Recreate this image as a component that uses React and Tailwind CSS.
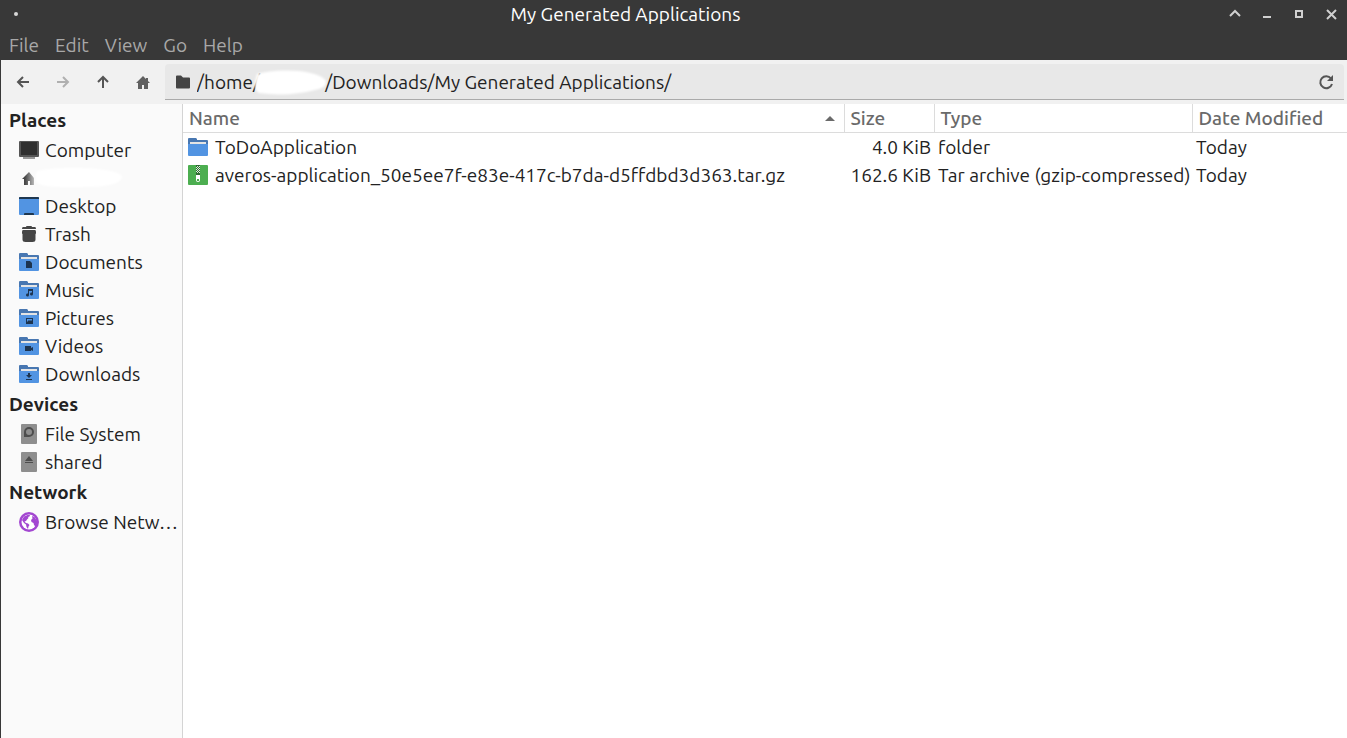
import React from "react";

const menus = ["File", "Edit", "View", "Go", "Help"];

function ComputerIcon() {
  return (
    <svg viewBox="0 0 20 20" className="size-5" aria-hidden="true">
      <path fill="#999" d="M4 17h12v2H4z" />
      <rect y="1" width="20" height="16" rx="1" fill="#555" />
      <rect x="2" y="2" width="16" height="13" fill="#303030" />
    </svg>
  );
}

function UserHomeIcon() {
  return (
    <svg viewBox="0 0 20 20" className="size-5" aria-hidden="true">
      <defs>
        <linearGradient id="fade">
          <stop offset="0.25" stopColor="#454545" />
          <stop offset="1" stopColor="#b8b8b8" />
        </linearGradient>
      </defs>
      <path fill="url(#fade)" d="M10 4 3 11h2v6h4v-4h2v4h4v-7z" />
    </svg>
  );
}

function DesktopIcon() {
  return (
    <svg viewBox="0 0 20 20" className="size-5" aria-hidden="true">
      <rect y="1" width="20" height="18" rx="1" fill="#5294e2" />
      <path fill="#1e3750" d="M0 3V2a1 1 0 0 1 1-1h18a1 1 0 0 1 1 1v1zM5 19v-1a1 1 0 0 1 1-1h8a1 1 0 0 1 1 1v1z" />
    </svg>
  );
}

function TrashIcon() {
  return (
    <svg viewBox="0 0 20 20" className="size-5" aria-hidden="true">
      <path
        fill="#454545"
        d="M8 2h4q1 0 1 1h3q1 0 1 2H3q0-2 1-2h3q0-1 1-1zM4 6h12q1 0 1 2v1q0 1-.5 1v5.500q0 2.500-3 2.500h-7q-3 0-3-2.500V10Q3 10 3 9V8q0-2 1-2z"
      />
    </svg>
  );
}

function FolderIcon({ children }) {
  return (
    <svg viewBox="0 0 20 20" className="size-5" aria-hidden="true">
      <path fill="#4877b1" d="M0 11V2a1 1 0 0 1 1-1h7l1 1v1h10a1 1 0 0 1 1 1v7z" />
      <path fill="#e4e4e4" d="M2 5h16v5H2z" />
      <path fill="#5294e2" d="M0 7h20v11a1 1 0 0 1-1 1H1a1 1 0 0 1-1-1z" />
      <g fill="#1d344f">{children}</g>
    </svg>
  );
}

function FileSystemIcon() {
  return (
    <svg viewBox="0 0 20 20" className="size-5" aria-hidden="true">
      <rect x="2" width="16" height="20" rx="1" fill="#8e8e8e" />
      <path fill="#4d4d4d" fillRule="evenodd" d="M10 3a5 5 0 1 1 0 10H5V8a5 5 0 0 1 5-5zm0 2a3 3 0 1 0 0 6 3 3 0 0 0 0-6z" />
    </svg>
  );
}

function RemovableIcon() {
  return (
    <svg viewBox="0 0 20 20" className="size-5" aria-hidden="true">
      <rect x="2" width="16" height="20" rx="1" fill="#8e8e8e" />
      <path fill="#4d4d4d" d="m10 4 4 5H6zM6 10h8v1H6z" />
    </svg>
  );
}

function NetworkIcon() {
  return (
    <svg viewBox="0 0 20 20" className="size-5" aria-hidden="true">
      <circle cx="10" cy="10" r="10" fill="#a347d1" />
      <circle cx="10" cy="10" r="7.500" fill="#fff" />
      <path
        fill="#a347d1"
        d="M5 4.500 8.500 3H11l-.5 1.500L9 5l.5 1L8 7.500 7 9l-1.500.5L7 11l2 .5 1.500 1.500-1 1.500-.5 2.500-1.500-2-.5-2.500L5 11 3 8zM13 4l2.500 1L18 9v4l-1.500 1.500L15 13l-.5-2-2-1-.5-2 1.500-1.500z"
      />
    </svg>
  );
}

function ArchiveIcon() {
  return (
    <svg viewBox="0 0 20 20" className="size-5" aria-hidden="true">
      <rect width="20" height="20" rx="1" fill="#4cae50" />
      <path fill="#2f6b32" d="M8 0h4v10H8z" />
      <path
        fill="#dfeede"
        d="M9 1h1v1H9zM11 1h1v1h-1zM8 2h1v1H8zM10 2h1v1h-1zM9 3h1v1H9zM11 3h1v1h-1zM8 4h1v1H8zM10 4h1v1h-1zM9 5h1v1H9zM11 5h1v1h-1zM8 6h1v1H8zM10 6h1v1h-1zM9 7h1v1H9zM11 7h1v1h-1z"
      />
      <path fill="#fff" fillRule="evenodd" d="M8 10h4v5a2 2 0 0 1-4 0zm1 4v2h2v-2z" />
    </svg>
  );
}

const sections = [
  {
    title: "Places",
    items: [
      { name: "Computer", icon: <ComputerIcon /> },
      { name: "", icon: <UserHomeIcon /> },
      { name: "Desktop", icon: <DesktopIcon /> },
      { name: "Trash", icon: <TrashIcon /> },
      { name: "Documents", icon: <FolderIcon><path d="M7 9h4l2 2v5H7z" /></FolderIcon> },
      {
        name: "Music",
        icon: (
          <FolderIcon>
            <path d="M9 9h5v5a1.500 1.500 0 1 1-1-1.400V11h-3v4a1.500 1.500 0 1 1-1-1.400z" />
          </FolderIcon>
        ),
      },
      {
        name: "Pictures",
        icon: (
          <FolderIcon>
            <path fillRule="evenodd" d="M7 10h7v6H7zm1 1v3l2-2 1 1 1-1 1 1v-2z" />
          </FolderIcon>
        ),
      },
      { name: "Videos", icon: <FolderIcon><path d="M6 10h6v2l2-1v4l-2-1v1H6z" /></FolderIcon> },
      {
        name: "Downloads",
        icon: (
          <FolderIcon>
            <path d="M9 9h2v2h2l-3 3-3-3h2zM7 15h6v1H7z" />
          </FolderIcon>
        ),
      },
    ],
  },
  {
    title: "Devices",
    items: [
      { name: "File System", icon: <FileSystemIcon /> },
      { name: "shared", icon: <RemovableIcon /> },
    ],
  },
  { title: "Network", items: [{ name: "Browse Netw…", icon: <NetworkIcon /> }] },
];

const files = [
  { name: "ToDoApplication", size: "4.0 KiB", type: "folder", date: "Today", icon: <FolderIcon /> },
  {
    name: "averos-application_50e5ee7f-e83e-417c-b7da-d5ffdbd3d363.tar.gz",
    size: "162.6 KiB",
    type: "Tar archive (gzip-compressed)",
    date: "Today",
    icon: <ArchiveIcon />,
  },
];

const windowButtons = [
  { label: "Roll up", drawing: <path d="m3 10 5-5 5 5" fill="none" stroke="currentColor" strokeWidth="2" /> },
  { label: "Minimize", drawing: <path d="M4 10h8v2H4z" fill="currentColor" /> },
  { label: "Maximize", drawing: <path d="M5 5h6v6H5z" fill="none" stroke="currentColor" strokeWidth="2" /> },
  { label: "Close", drawing: <path d="m4 4 9 9M13 4l-9 9" fill="none" stroke="currentColor" strokeWidth="2" /> },
];

function ToolButton({ label, disabled, children }) {
  return (
    <button
      type="button"
      aria-label={label}
      disabled={disabled}
      className="flex h-9 w-10 items-center justify-center text-[#555] disabled:text-[#b0b0b0]"
    >
      <svg viewBox="0 0 16 16" className="size-4" fill="none" stroke="currentColor" strokeWidth="2" aria-hidden="true">
        {children}
      </svg>
    </button>
  );
}

export default function App() {
  return (
    <div className="flex min-h-screen flex-col bg-white font-['Ubuntu','Noto_Sans',sans-serif] text-[19px] leading-7 text-[#222]">
      <header className="bg-[#383838]">
        <div className="flex h-7 items-center">
          <div className="flex w-8 justify-center">
            <span className="size-1 rounded-full bg-[#d8d8d8]" />
          </div>
          <h1 className="flex-1 text-center text-white">My Generated Applications</h1>
          <div className="flex text-[#d0d0d0]">
            {windowButtons.map((b) => (
              <button key={b.label} type="button" aria-label={b.label} className="flex h-7 w-8 items-center justify-center">
                <svg viewBox="0 0 16 16" className="size-4" aria-hidden="true">
                  {b.drawing}
                </svg>
              </button>
            ))}
          </div>
        </div>
        <nav className="flex h-8 items-center px-px pt-[2px] text-[#a8a8a8]">
          {menus.map((m) => (
            <button key={m} type="button" className="px-2">
              {m}
            </button>
          ))}
        </nav>
      </header>

      <div className="flex flex-1 flex-col border-l border-[#383838]">
        <div className="flex h-11 items-center bg-[#f1f1f1] pr-[3px] pl-[2px]">
          <ToolButton label="Back">
            <path d="M14 8H3M8 3 3 8l5 5" />
          </ToolButton>
          <ToolButton label="Forward" disabled>
            <path d="M2 8h11M8 3l5 5-5 5" />
          </ToolButton>
          <ToolButton label="Up">
            <path d="M8 14V3M3 8l5-5 5 5" />
          </ToolButton>
          <ToolButton label="Home">
            <path fill="#606060" stroke="none" d="M8 2 1 9h2v6h4v-4h2v4h4V9h2l-2-2V4h-2v1z" />
          </ToolButton>
          <div className="relative ml-[2px] flex h-9 flex-1 items-center rounded-t border-b border-[#aaa] bg-[#e8e8e8] pl-[11px]">
            <svg viewBox="0 0 14 14" className="size-[14px]" aria-hidden="true">
              <path fill="#444" d="M0 1.500A1 1 0 0 1 1 .5h4l2 2h6a1 1 0 0 1 1 1v9a1 1 0 0 1-1 1H1a1 1 0 0 1-1-1z" />
            </svg>
            <input
              aria-label="Location"
              defaultValue={"/home/" + "\u00a0".repeat(15) + "/Downloads/My Generated Applications/"}
              className="ml-[7px] h-7 min-w-0 flex-1 bg-transparent outline-none"
            />
            <svg viewBox="0 0 84 28" className="absolute top-[5px] left-[85px] h-7 w-[84px]" aria-hidden="true">
              <path fill="#fff" className="blur-[1px]" d="M7 5Q24 0 49 2Q72 5 76 12Q77 19 65 21Q38 28 9 24Q2 21 7 5z" />
            </svg>
            <button type="button" aria-label="Reload" className="flex w-9 justify-center text-[#555]">
              <svg viewBox="0 0 16 16" className="size-4" aria-hidden="true">
                <path d="M13 4.500A6 6 0 1 0 14 10" fill="none" stroke="currentColor" strokeWidth="2" />
                <path d="M15 1v6H9z" fill="currentColor" />
              </svg>
            </button>
          </div>
        </div>

        <div className="flex flex-1">
          <aside className="w-[182px] shrink-0 border-r border-[#d4d4d4] bg-[#fafafa]">
            {sections.map((s) => (
              <section key={s.title}>
                <h2 className="flex h-8 items-center pl-2 font-bold">{s.title}</h2>
                <ul>
                  {s.items.map((item) => (
                    <li key={item.name}>
                      <a
                        href="#"
                        aria-label={item.name || "Home folder"}
                        className="relative flex h-7 items-center gap-[6px] pl-[18px] whitespace-nowrap"
                      >
                        <span className="shrink-0">{item.icon}</span>
                        {item.name ? (
                          <span>{item.name}</span>
                        ) : (
                          <svg viewBox="0 0 90 24" className="absolute top-[2px] left-8 h-6 w-[90px]" aria-hidden="true">
                            <path fill="#fff" className="blur-[1px]" d="M4 5Q24 1 50 2Q88 4 89 11Q88 21 50 21Q16 22 6 18Q0 15 4 5z" />
                          </svg>
                        )}
                      </a>
                    </li>
                  ))}
                </ul>
              </section>
            ))}
          </aside>

          <main className="min-w-0 flex-1">
            <table className="w-full table-fixed border-collapse whitespace-nowrap">
              <colgroup>
                <col />
                <col className="w-[90px]" />
                <col className="w-[258px]" />
                <col className="w-[155px]" />
              </colgroup>
              <thead>
                <tr className="text-left text-[#6a6a6a]">
                  <th className="border-r border-b border-[#dcdcdc] p-0 px-[6px] font-medium">
                    <div className="flex items-center justify-between">
                      Name
                      <svg viewBox="0 0 10 5" className="mr-[3px] h-[5px] w-[10px]" aria-hidden="true">
                        <path fill="#6a6a6a" d="m5 0 5 5H0z" />
                      </svg>
                    </div>
                  </th>
                  <th className="border-r border-b border-[#dcdcdc] p-0 px-[6px] font-medium">Size</th>
                  <th className="border-r border-b border-[#dcdcdc] p-0 px-[6px] font-medium">Type</th>
                  <th className="border-b border-[#dcdcdc] p-0 px-[6px] font-medium">Date Modified</th>
                </tr>
              </thead>
              <tbody>
                {files.map((f) => (
                  <tr key={f.name}>
                    <td className="p-0 pl-[5px]">
                      <div className="flex items-center gap-[7px]">
                        {f.icon}
                        {f.name}
                      </div>
                    </td>
                    <td className="p-0 pr-[3px] text-right">{f.size}</td>
                    <td className="p-0 pl-1">{f.type}</td>
                    <td className="p-0 pl-1">{f.date}</td>
                  </tr>
                ))}
              </tbody>
            </table>
          </main>
        </div>
      </div>
    </div>
  );
}
